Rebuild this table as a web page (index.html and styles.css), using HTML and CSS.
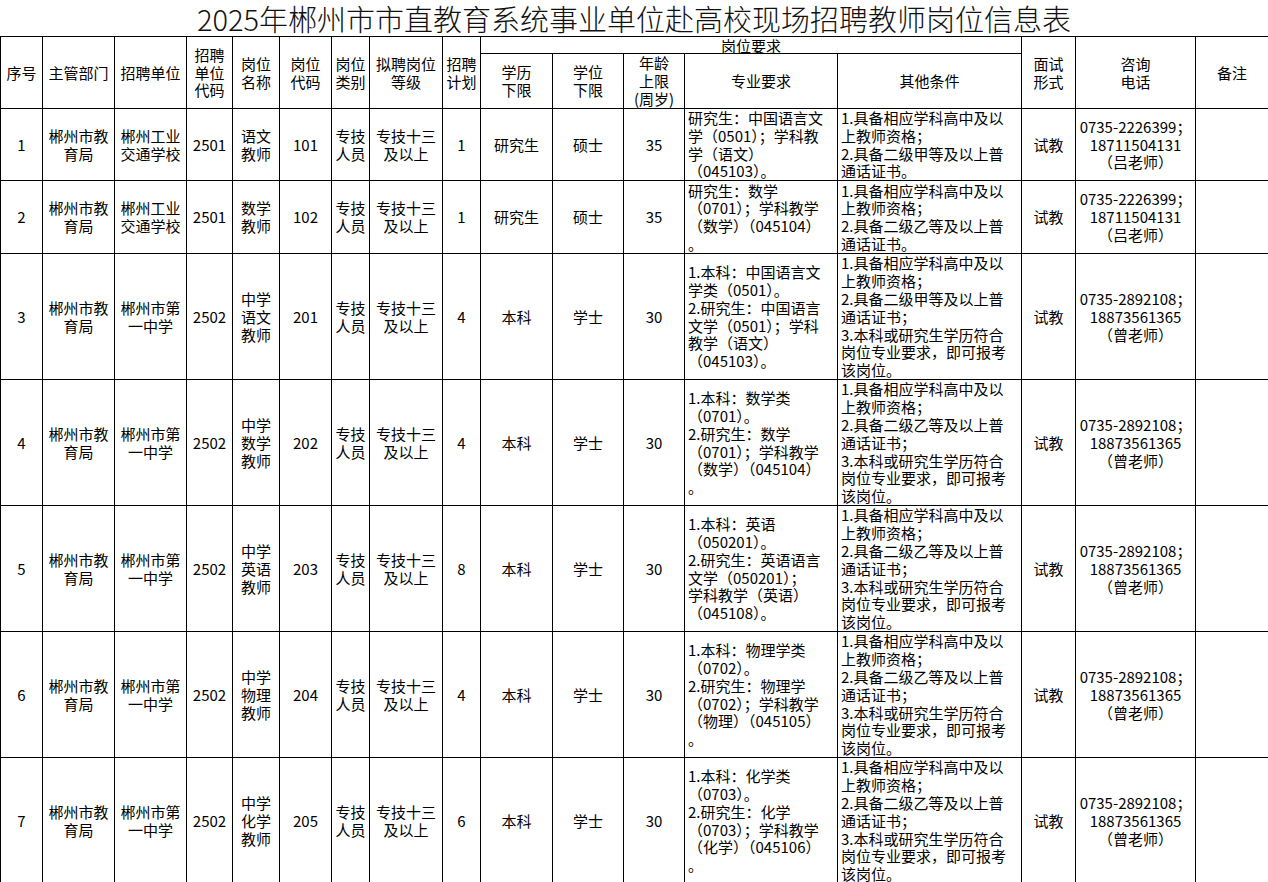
FILE: index.html
```html
<!DOCTYPE html>
<html lang="zh-CN">
<head>
<meta charset="utf-8">
<title>岗位信息表</title>
<link rel="stylesheet" href="styles.css">
</head>
<body>
<div class="title">2025年郴州市市直教育系统事业单位赴高校现场招聘教师岗位信息表</div>
<table class="grid">
  <colgroup>
    <col class="w42"><col class="w72"><col class="w72"><col class="w46"><col class="w47"><col class="w52"><col class="w38"><col class="w73"><col class="w38"><col class="w72"><col class="w71"><col class="w61"><col class="w153"><col class="w184"><col class="w54"><col class="w120"><col class="w73">
  </colgroup>
  <thead>
    <tr class="h-top">
      <th rowspan="2">序号</th>
      <th rowspan="2">主管部门</th>
      <th rowspan="2">招聘单位</th>
      <th rowspan="2">招聘<br>单位<br>代码</th>
      <th rowspan="2">岗位<br>名称</th>
      <th rowspan="2">岗位<br>代码</th>
      <th rowspan="2">岗位<br>类别</th>
      <th rowspan="2">拟聘岗位<br>等级</th>
      <th rowspan="2">招聘<br>计划</th>
      <th colspan="5" class="group">岗位要求</th>
      <th rowspan="2">面试<br>形式</th>
      <th rowspan="2">咨询<br>电话</th>
      <th rowspan="2">备注</th>
    </tr>
    <tr class="h-bottom">
      <th>学历<br>下限</th>
      <th>学位<br>下限</th>
      <th>年龄<br>上限<br>(周岁)</th>
      <th>专业要求</th>
      <th>其他条件</th>
    </tr>
  </thead>
  <tbody>
    <tr class="r72">
      <td>1</td><td>郴州市教<br>育局</td><td>郴州工业<br>交通学校</td><td>2501</td><td>语文<br>教师</td><td>101</td><td>专技<br>人员</td><td>专技十三<br>及以上</td><td>1</td><td>研究生</td><td>硕士</td><td>35</td>
      <td class="left">研究生：中国语言文<br>学（0501）；学科教<br>学（语文）<br>（045103）。</td>
      <td class="left">1.具备相应学科高中及以<br>上教师资格；<br>2.具备二级甲等及以上普<br>通话证书。</td>
      <td>试教</td><td>0735-2226399；<br>18711504131<br>（吕老师）</td><td></td>
    </tr>
    <tr class="r73">
      <td>2</td><td>郴州市教<br>育局</td><td>郴州工业<br>交通学校</td><td>2501</td><td>数学<br>教师</td><td>102</td><td>专技<br>人员</td><td>专技十三<br>及以上</td><td>1</td><td>研究生</td><td>硕士</td><td>35</td>
      <td class="left">研究生：数学<br>（0701）；学科教学<br>（数学）（045104）<br>。</td>
      <td class="left">1.具备相应学科高中及以<br>上教师资格；<br>2.具备二级乙等及以上普<br>通话证书。</td>
      <td>试教</td><td>0735-2226399；<br>18711504131<br>（吕老师）</td><td></td>
    </tr>
    <tr class="r126">
      <td>3</td><td>郴州市教<br>育局</td><td>郴州市第<br>一中学</td><td>2502</td><td>中学<br>语文<br>教师</td><td>201</td><td>专技<br>人员</td><td>专技十三<br>及以上</td><td>4</td><td>本科</td><td>学士</td><td>30</td>
      <td class="left">1.本科：中国语言文<br>学类（0501）。<br>2.研究生：中国语言<br>文学（0501）；学科<br>教学（语文）<br>（045103）。</td>
      <td class="left">1.具备相应学科高中及以<br>上教师资格；<br>2.具备二级甲等及以上普<br>通话证书；<br>3.本科或研究生学历符合<br>岗位专业要求，即可报考<br>该岗位。</td>
      <td>试教</td><td>0735-2892108；<br>18873561365<br>（曾老师）</td><td></td>
    </tr>
    <tr class="r126">
      <td>4</td><td>郴州市教<br>育局</td><td>郴州市第<br>一中学</td><td>2502</td><td>中学<br>数学<br>教师</td><td>202</td><td>专技<br>人员</td><td>专技十三<br>及以上</td><td>4</td><td>本科</td><td>学士</td><td>30</td>
      <td class="left">1.本科：数学类<br>（0701）。<br>2.研究生：数学<br>（0701）；学科教学<br>（数学）（045104）<br>。</td>
      <td class="left">1.具备相应学科高中及以<br>上教师资格；<br>2.具备二级乙等及以上普<br>通话证书；<br>3.本科或研究生学历符合<br>岗位专业要求，即可报考<br>该岗位。</td>
      <td>试教</td><td>0735-2892108；<br>18873561365<br>（曾老师）</td><td></td>
    </tr>
    <tr class="r126">
      <td>5</td><td>郴州市教<br>育局</td><td>郴州市第<br>一中学</td><td>2502</td><td>中学<br>英语<br>教师</td><td>203</td><td>专技<br>人员</td><td>专技十三<br>及以上</td><td>8</td><td>本科</td><td>学士</td><td>30</td>
      <td class="left">1.本科：英语<br>（050201）。<br>2.研究生：英语语言<br>文学（050201）；<br>学科教学（英语）<br>（045108）。</td>
      <td class="left">1.具备相应学科高中及以<br>上教师资格；<br>2.具备二级乙等及以上普<br>通话证书；<br>3.本科或研究生学历符合<br>岗位专业要求，即可报考<br>该岗位。</td>
      <td>试教</td><td>0735-2892108；<br>18873561365<br>（曾老师）</td><td></td>
    </tr>
    <tr class="r126">
      <td>6</td><td>郴州市教<br>育局</td><td>郴州市第<br>一中学</td><td>2502</td><td>中学<br>物理<br>教师</td><td>204</td><td>专技<br>人员</td><td>专技十三<br>及以上</td><td>4</td><td>本科</td><td>学士</td><td>30</td>
      <td class="left">1.本科：物理学类<br>（0702）。<br>2.研究生：物理学<br>（0702）；学科教学<br>（物理）（045105）<br>。</td>
      <td class="left">1.具备相应学科高中及以<br>上教师资格；<br>2.具备二级乙等及以上普<br>通话证书；<br>3.本科或研究生学历符合<br>岗位专业要求，即可报考<br>该岗位。</td>
      <td>试教</td><td>0735-2892108；<br>18873561365<br>（曾老师）</td><td></td>
    </tr>
    <tr class="r126">
      <td>7</td><td>郴州市教<br>育局</td><td>郴州市第<br>一中学</td><td>2502</td><td>中学<br>化学<br>教师</td><td>205</td><td>专技<br>人员</td><td>专技十三<br>及以上</td><td>6</td><td>本科</td><td>学士</td><td>30</td>
      <td class="left">1.本科：化学类<br>（0703）。<br>2.研究生：化学<br>（0703）；学科教学<br>（化学）（045106）<br>。</td>
      <td class="left">1.具备相应学科高中及以<br>上教师资格；<br>2.具备二级乙等及以上普<br>通话证书；<br>3.本科或研究生学历符合<br>岗位专业要求，即可报考<br>该岗位。</td>
      <td>试教</td><td>0735-2892108；<br>18873561365<br>（曾老师）</td><td></td>
    </tr>
  </tbody>
</table>
</body>
</html>
```

FILE: styles.css
```css
html, body {
  margin: 0;
  padding: 0;
  background: #fff;
  color: #000;
  font-family: "Noto Sans CJK SC", "Noto Sans", sans-serif;
}

.title {
  height: 36px;
  line-height: 36px;
  font-size: 29px;
  font-weight: 300;
  text-align: center;
  white-space: nowrap;
  color: #111;
}

.grid {
  border-collapse: collapse;
  table-layout: fixed;
  width: 1268px;
}

.grid th,
.grid td {
  border: 1px solid #000;
  padding: 0 2px;
  font-size: 15px;
  line-height: 17.8px;
  font-weight: normal;
  text-align: center;
  vertical-align: middle;
  white-space: nowrap;
  overflow: hidden;
}

.grid td.left {
  text-align: left;
  padding-left: 3px;
}

.grid th.group {
  line-height: 15px;
}

.h-top { height: 17px; }
.h-bottom { height: 55px; }
.r72 { height: 72px; }
.r73 { height: 73px; }
.r126 { height: 126px; }

.w42 { width: 42px; }
.w72 { width: 72px; }
.w46 { width: 46px; }
.w47 { width: 47px; }
.w52 { width: 52px; }
.w38 { width: 38px; }
.w73 { width: 73px; }
.w71 { width: 71px; }
.w61 { width: 61px; }
.w153 { width: 153px; }
.w184 { width: 184px; }
.w54 { width: 54px; }
.w120 { width: 120px; }
```
